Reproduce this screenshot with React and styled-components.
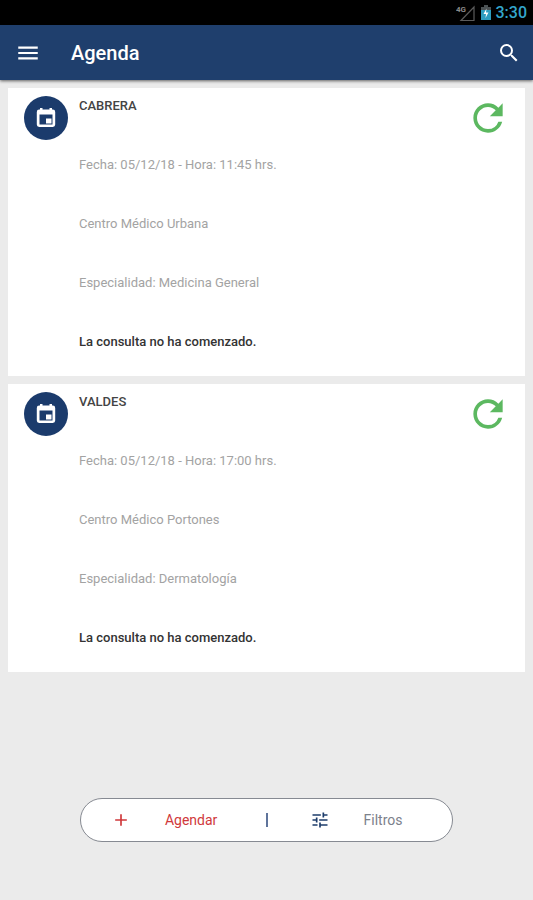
import React from "react";
import styled, { createGlobalStyle } from "styled-components";
import { MdAdd, MdMenu, MdRefresh, MdSearch, MdTune } from "react-icons/md";

const appointments = [
  {
    name: "CABRERA",
    date: "05/12/18",
    time: "11:45",
    center: "Centro Médico Urbana",
    specialty: "Medicina General",
    status: "La consulta no ha comenzado.",
  },
  {
    name: "VALDES",
    date: "05/12/18",
    time: "17:00",
    center: "Centro Médico Portones",
    specialty: "Dermatología",
    status: "La consulta no ha comenzado.",
  },
];

function Signal() {
  return (
    <svg width="20" height="18" viewBox="0 0 20 18" aria-hidden="true">
      <text x="0" y="8" fontSize="8" fontWeight="700" fill="#8a8a8a">
        4G
      </text>
      <path d="M18 3v13.5H5z" fill="none" stroke="#5c5c5c" strokeWidth="1.2" />
    </svg>
  );
}

function Battery() {
  return (
    <svg width="12" height="16" viewBox="0 0 12 16" aria-hidden="true">
      <path d="M4 0h4v2h3v4H1V2h3z" fill="#4c5254" />
      <path d="M1 5h10v10H1z" fill="#2d9dc0" />
      <path d="M6.5 3.500 3.500 9H6l-.5 4 3-5.500H6z" fill="#fff" />
    </svg>
  );
}

function Calendar() {
  return (
    <svg width="24" height="24" viewBox="0 0 24 24" aria-hidden="true">
      <path
        fill="currentColor"
        fillRule="evenodd"
        d="M6 2h2.500v1.500h7V2H18v1.500h.8a2.400 2.400 0 0 1 2.400 2.400v12.700a2.400 2.400 0 0 1-2.400 2.400H5.200a2.400 2.400 0 0 1-2.400-2.400V5.900a2.400 2.400 0 0 1 2.400-2.400H6zM5.500 8.500v10h13v-10z"
      />
      <path fill="currentColor" d="M12 12.500h5.500v5H12z" />
    </svg>
  );
}

function Appointment({ item }) {
  return (
    <Card>
      <Avatar>
        <Calendar />
      </Avatar>
      <Details>
        <Name>{item.name}</Name>
        <Line>
          Fecha: {item.date} - Hora: {item.time} hrs.
        </Line>
        <Line>{item.center}</Line>
        <Line>Especialidad: {item.specialty}</Line>
        <Status>{item.status}</Status>
      </Details>
      <RefreshButton aria-label={`Actualizar ${item.name}`}>
        <MdRefresh size={44} />
      </RefreshButton>
    </Card>
  );
}

export default function App() {
  return (
    <Screen>
      <GlobalStyle />
      <StatusBar>
        <Signal />
        <Battery />
        <Clock>3:30</Clock>
      </StatusBar>
      <AppBar>
        <IconButton aria-label="Menú">
          <MdMenu size={26} />
        </IconButton>
        <Title>Agenda</Title>
        <IconButton aria-label="Buscar">
          <MdSearch size={24} />
        </IconButton>
      </AppBar>
      <List>
        {appointments.map((item) => (
          <Appointment key={item.name} item={item} />
        ))}
      </List>
      <Actions>
        <Action $color="#d0383b" $pad={30}>
          <MdAdd size={20} />
          Agendar
        </Action>
        <Divider />
        <Action $color="#7c818b" $icon="#1d3c6b" $pad={42}>
          <MdTune size={20} />
          Filtros
        </Action>
      </Actions>
    </Screen>
  );
}

const GlobalStyle = createGlobalStyle`
  * {
    box-sizing: border-box;
  }
  body {
    margin: 0;
    background: #ebebeb;
    font-family: Roboto, "Liberation Sans", sans-serif;
  }
  button {
    border: 0;
    padding: 0;
    background: none;
    font: inherit;
    color: inherit;
    cursor: pointer;
  }
  svg {
    display: block;
    flex: none;
  }
`;

const Screen = styled.div`
  display: flex;
  flex-direction: column;
  min-height: 100vh;
`;

const StatusBar = styled.div`
  display: flex;
  justify-content: flex-end;
  align-items: center;
  gap: 4px;
  height: 25px;
  padding-right: 6px;
  background: #000;
`;

const Clock = styled.span`
  font-size: 16px;
  line-height: 20px;
  font-weight: 500;
  color: #33a5cc;
`;

const AppBar = styled.header`
  display: flex;
  align-items: center;
  height: 55px;
  padding: 0 12px 0 15px;
  background: #1f3f6d;
  color: #fff;
  box-shadow: 0 1px 3px rgba(0, 0, 0, 0.6);
`;

const IconButton = styled.button`
  display: flex;
`;

const Title = styled.h1`
  flex: 1;
  margin: 0 0 0 30px;
  font-size: 20px;
  line-height: 24px;
  font-weight: 500;
`;

const List = styled.main`
  display: flex;
  flex-direction: column;
  gap: 8px;
  padding: 8px;
`;

const Card = styled.article`
  display: flex;
  align-items: flex-start;
  padding: 8px 15px 26px 16px;
  background: #fff;
`;

const Avatar = styled.div`
  display: flex;
  align-items: center;
  justify-content: center;
  width: 44px;
  height: 44px;
  border-radius: 50%;
  background: #1b3b6c;
  color: #fff;
`;

const Details = styled.div`
  display: flex;
  flex: 1;
  flex-direction: column;
  gap: 43px;
  padding: 2px 0 0 11px;
  font-size: 13px;
  line-height: 16px;
`;

const Name = styled.h2`
  margin: 0;
  font-size: 13px;
  font-weight: 500;
  color: #444;
`;

const Line = styled.p`
  margin: 0;
  color: #a3a3a3;
`;

const Status = styled.p`
  margin: 0;
  font-weight: 500;
  color: #333;
`;

const RefreshButton = styled.button`
  display: flex;
  color: #5cb860;
`;

const Actions = styled.footer`
  display: grid;
  grid-template-columns: 1fr 2px 1fr;
  align-items: center;
  width: 70%;
  height: 44px;
  margin: auto auto 58px;
  border: 1px solid #868a92;
  border-radius: 22px;
  background: #fff;
`;

const Action = styled.button`
  display: flex;
  align-items: center;
  gap: 34px;
  height: 100%;
  padding-left: ${(props) => props.$pad}px;
  font-size: 14px;
  color: ${(props) => props.$color};

  svg {
    color: ${(props) => props.$icon || props.$color};
  }
`;

const Divider = styled.span`
  height: 14px;
  background: #5f749b;
`;
